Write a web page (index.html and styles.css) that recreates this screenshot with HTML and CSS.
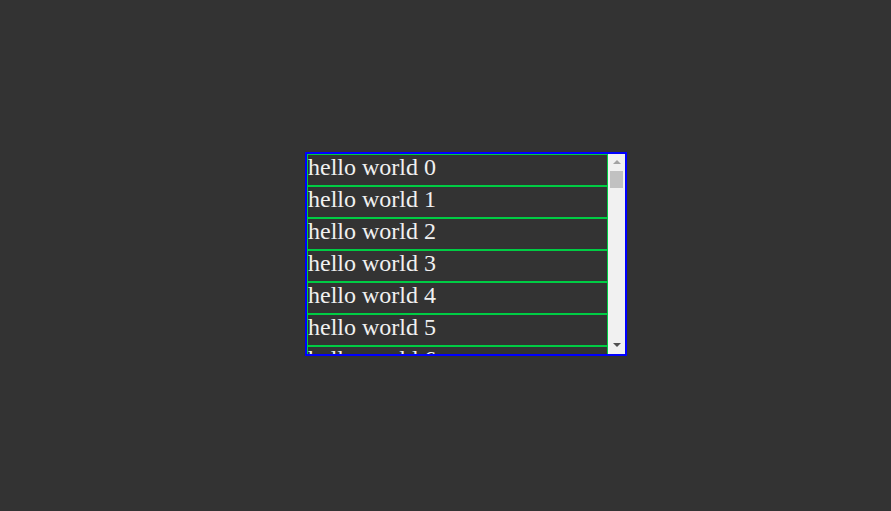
FILE: index.html
```html
<!DOCTYPE html>
<html lang="en">
<head>
    <meta charset="UTF-8">
    <title>List</title>
    <link rel="stylesheet" href="styles.css">
</head>
<body>
<div class="box">
    <div id="list" class="list"></div>
    <div class="scrollbar">
        <div class="btn">
            <svg width="8" height="5" viewBox="0 0 8 5"><polygon points="0,4 4,0 8,4" fill="#a3a3a3"/></svg>
        </div>
        <div class="track">
            <div class="thumb"></div>
        </div>
        <div class="btn">
            <svg width="8" height="5" viewBox="0 0 8 5"><polygon points="0,0 8,0 4,4" fill="#505050"/></svg>
        </div>
    </div>
</div>
<script>
    var oList = document.getElementById('list');
    var html = '';
    for (var i = 0; i < 60; i++) {
        html += '<div class="item"><span class="text">hello world ' + i + '</span></div>';
    }
    oList.innerHTML = html;
</script>
</body>
</html>
```
FILE: styles.css
```css
*{
    margin: 0;
    padding: 0;
}
body{
    background: #333333;
    font-family: "Liberation Serif", "Times New Roman", serif;
    color: #f0f0f0;
}
.box{
    width: 318px;
    height: 200px;
    margin: 152px 0 0 305px;
    border: 2px solid #0000ff;
    display: flex;
}
.list{
    width: 301px;
    flex-shrink: 0;
    overflow: hidden;
}
.list .item{
    box-sizing: border-box;
    width: 301px;
    height: 32px;
    padding: 1px;
    background: #00cc44;
}
.list .item .text{
    display: block;
    height: 30px;
    line-height: 24px;
    font-size: 24px;
    background: #333333;
    white-space: nowrap;
}
.scrollbar{
    width: 17px;
    flex-shrink: 0;
    background: #f1f1f1;
    display: flex;
    flex-direction: column;
}
.scrollbar .btn{
    height: 17px;
    display: flex;
    align-items: center;
    justify-content: center;
}
.scrollbar .track{
    flex: 1;
    padding: 0 2px;
}
.scrollbar .thumb{
    height: 17px;
    background: #c1c1c1;
}
```
